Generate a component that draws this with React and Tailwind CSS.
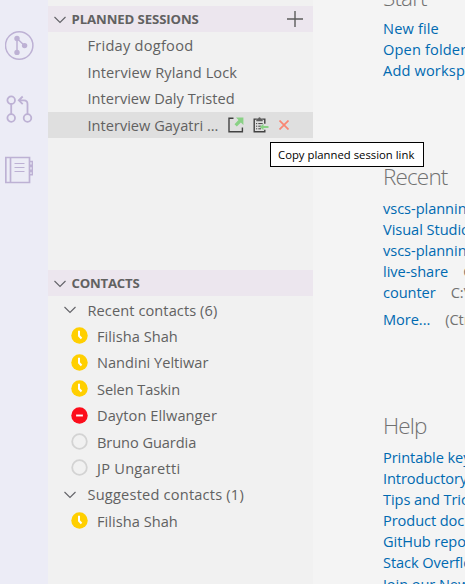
const font = "font-['Open_Sans','Noto_Sans',sans-serif]";

function Chevron({ className = '' }) {
  return (
    <svg className={`h-[8px] w-[12px] shrink-0 ${className}`} viewBox="0 0 12 8" fill="none" stroke="#646469" strokeWidth="1.15">
      <path d="M.5 1 6 6.5 11.5 1" />
    </svg>
  );
}

function SectionHeader({ title, tracking, children }) {
  return (
    <div className="flex h-[26px] shrink-0 items-center bg-[#ece6ee] pl-[5.5px]">
      <Chevron className="mt-[2px]" />
      <span className={`ml-[6px] text-[13.2px] font-bold leading-[26px] text-[#616161] ${tracking}`}>{title}</span>
      {children}
    </div>
  );
}

const statusIcons = {
  away: (
    <>
      <circle cx="8.5" cy="8.5" r="8.2" fill="#ffcf00" />
      <path d="M8 3.8v5l2.5 2.7" fill="none" stroke="#fff" strokeWidth="2" />
    </>
  ),
  busy: (
    <>
      <circle cx="8.5" cy="8.5" r="8.2" fill="#fc0d1b" />
      <path d="M5.1 8.5h6.8" stroke="#fff" strokeWidth="1.9" />
    </>
  ),
  offline: <circle cx="8.5" cy="8.5" r="7.3" fill="none" stroke="#d3d3d3" strokeWidth="1.8" />,
};

function Contact({ status, name, tracking }) {
  return (
    <div className="flex h-[26.4px] items-center pl-[23px]">
      <svg className="h-[17px] w-[17px] shrink-0" viewBox="0 0 17 17">{statusIcons[status]}</svg>
      <span className={`ml-[9px] ${tracking}`}>{name}</span>
    </div>
  );
}

function Group({ label, tracking }) {
  return (
    <div className="flex h-[26.4px] items-center pl-[16px]">
      <Chevron className="mt-[1px]" />
      <span className={`ml-[11.5px] ${tracking}`}>{label}</span>
    </div>
  );
}

function ActivityBar() {
  return (
    <nav className="flex w-[48px] shrink-0 flex-col items-start bg-[#ececf6] pl-[5px] pt-[31px]">
      <svg className="h-[29px] w-[29px]" viewBox="0 0 29 29" fill="none" stroke="#bdb1d4" strokeWidth="1.5">
        <circle cx="14.2" cy="14.5" r="13.7" />
        <path d="M12 7.5v14M12 7.5l7.5 7" />
        <g fill="#bdb1d4" stroke="none">
          <circle cx="12" cy="7.5" r="2.7" />
          <circle cx="12" cy="21.4" r="2.7" />
          <circle cx="19.6" cy="14.6" r="2.7" />
        </g>
      </svg>
      <svg className="mt-[35px] h-[29px] w-[29px]" viewBox="0 0 29 29" fill="none" stroke="#bdb1d4" strokeWidth="1.8">
        <circle cx="6.2" cy="5.2" r="3.8" />
        <circle cx="6.2" cy="23" r="3.8" />
        <circle cx="22.5" cy="23" r="3.8" />
        <path d="M6.2 9v10.2M22.5 19.2V9Q22.5 5.3 19 5.3h-5M17.7 1.5 13.8 5.3l3.9 3.8" />
      </svg>
      <svg className="mt-[32px] h-[28px] w-[29px]" viewBox="0 0 29 28" fill="none" stroke="#bdb1d4" strokeWidth="1.7">
        <path d="M.8 1.5h23.7v25H.8zM5.5 1.5v25" />
        <path d="M9.5 7.5h10M9.5 11.5h10M9.5 15.5h10" strokeWidth="1.1" />
        <path d="M24.5 5.5h2.8v3.7h-2.8M24.5 10.5h2.8v3.7h-2.8M24.5 15.5h2.8v3.2h-2.8" strokeWidth="1.4" />
      </svg>
    </nav>
  );
}

function SessionActions() {
  return (
    <>
      <svg className="ml-[9.5px] h-[16px] w-[16px] shrink-0" viewBox="0 0 16 16" fill="none">
        <path d="M5.5 1.3H1v13.4h13.4V10.5" stroke="#424242" strokeWidth="1.4" />
        <path d="M8 .6h7.4v7.4l-2.5-2.5-4.1 4-2.3-2.3 4-4.1z" fill="#89d185" />
      </svg>
      <svg className="ml-[9px] h-[16px] w-[16px] shrink-0" viewBox="0 0 16 16" fill="none">
        <path d="M3.5 2.1H1.2v12.7h10.6v-2M9.5 2.1h2.3v4.7" stroke="#424242" strokeWidth="1.4" />
        <path d="M3.3 1.4h1.8Q6.5-.8 7.9 1.4h1.8v2.8H3.3z" fill="#606060" />
        <path d="M3 6.6h1.2M5.3 6.6h4.4M3 9.2h1.2M5.3 9.2H8M3 11.8h1.2M5.3 11.8H8" stroke="#424242" />
        <path d="m6.8 10 3.7-3.2v2.1h5v2.2h-5v2.1z" fill="#89d185" />
      </svg>
      <svg className="ml-[9.5px] h-[10px] w-[10px] shrink-0" viewBox="0 0 10 10" stroke="#f98672" strokeWidth="1.7">
        <path d="m.5.5 9 9M9.5.5l-9 9" />
      </svg>
    </>
  );
}

function SideBar() {
  return (
    <aside className="flex w-[265px] shrink-0 flex-col bg-[#f1f1f1] pt-[6px] text-[14.6px] leading-[26px] text-[#616161]">
      <SectionHeader title="PLANNED SESSIONS" tracking="tracking-[-0.1px]">
        <svg className="ml-auto mr-[10px] h-[16px] w-[16px]" viewBox="0 0 16 16" stroke="#5c5c5c" strokeWidth="1.4">
          <path d="M8 0v16M0 8h16" />
        </svg>
      </SectionHeader>
      <div className="flex h-[238px] shrink-0 flex-col whitespace-nowrap">
        <div className="h-[26.6px] pl-[39.5px] tracking-[0.25px]">Friday dogfood</div>
        <div className="h-[26.6px] pl-[39.5px] tracking-[0.1px]">Interview Ryland Lock</div>
        <div className="h-[26.6px] pl-[39.5px] tracking-[0px]">Interview Daly Tristed</div>
        <div className="flex h-[26.4px] items-center bg-[#dfdfdf] pl-[39.5px]">
          <span className="w-[131px] shrink-0 tracking-[0px]">Interview Gayatri ...</span>
          <SessionActions />
        </div>
      </div>
      <SectionHeader title="CONTACTS" tracking="tracking-[-0.2px]" />
      <div className="whitespace-nowrap pt-[0.4px]">
        <Group label="Recent contacts (6)" tracking="tracking-[0.08px]" />
        <Contact status="away" name="Filisha Shah" tracking="tracking-[0.03px]" />
        <Contact status="away" name="Nandini Yeltiwar" tracking="tracking-[0px]" />
        <Contact status="away" name="Selen Taskin" tracking="tracking-[-0.1px]" />
        <Contact status="busy" name="Dayton Ellwanger" tracking="tracking-[0.08px]" />
        <Contact status="offline" name="Bruno Guardia" tracking="tracking-[-0.08px]" />
        <Contact status="offline" name="JP Ungaretti" tracking="tracking-[0.25px]" />
        <Group label="Suggested contacts (1)" tracking="tracking-[0.2px]" />
        <Contact status="away" name="Filisha Shah" tracking="tracking-[0.03px]" />
      </div>
    </aside>
  );
}

function Heading({ children }) {
  return <h2 className="h-[30px] text-[22.5px] font-light leading-[30px] tracking-[-0.85px] text-[#717171]">{children}</h2>;
}

function Links({ items }) {
  return items.map((item, i) => (
    <div key={i} className="h-[21.1px] leading-[21px]">{item}</div>
  ));
}

function Welcome() {
  return (
    <main className="flex min-w-0 flex-1 flex-col overflow-hidden whitespace-nowrap bg-[#f4f4f4] pl-[70px] text-[14.6px] tracking-[-0.05px] text-[#006ab1]">
      <section className="-mt-[17px] h-[179px] shrink-0">
        <Heading>Start</Heading>
        <div className="pt-[5px] tracking-[0.15px]">
          <Links items={['New file', 'Open folder...', 'Add workspace folder...']} />
        </div>
      </section>
      <section className="h-[249px] shrink-0">
        <Heading>Recent</Heading>
        <div className="pt-[6px]">
          <Links
            items={[
              'vscs-planning',
              'Visual Studio',
              'vscs-planning',
              <>live-share<span className="ml-[15px] text-[#717171]">C:\</span></>,
              <>counter<span className="ml-[15px] text-[#717171]">C:\</span></>,
            ]}
          />
          <div className="pt-[6px] leading-[21px]">More...<span className="ml-[15px] text-[#717171]">(Ctrl+R)</span></div>
        </div>
      </section>
      <section className="shrink-0">
        <Heading>Help</Heading>
        <div className="pt-[6px] tracking-[-0.08px]">
          <Links
            items={[
              'Printable keyboard cheatsheet',
              'Introductory videos',
              'Tips and Tricks',
              'Product documentation',
              'GitHub repository',
              'Stack Overflow',
              'Join our Newsletter',
            ]}
          />
        </div>
      </section>
    </main>
  );
}

export default function App() {
  return (
    <div className={`relative flex h-[584px] w-[465px] overflow-hidden ${font}`}>
      <ActivityBar />
      <SideBar />
      <Welcome />
      <div role="tooltip" className="absolute left-[270px] top-[142px] flex h-[25px] w-[154px] items-center whitespace-nowrap border border-black bg-white pl-[7px] pt-[1px] text-[11.3px] tracking-[0.01px] text-black">
        Copy planned session link
      </div>
    </div>
  );
}
